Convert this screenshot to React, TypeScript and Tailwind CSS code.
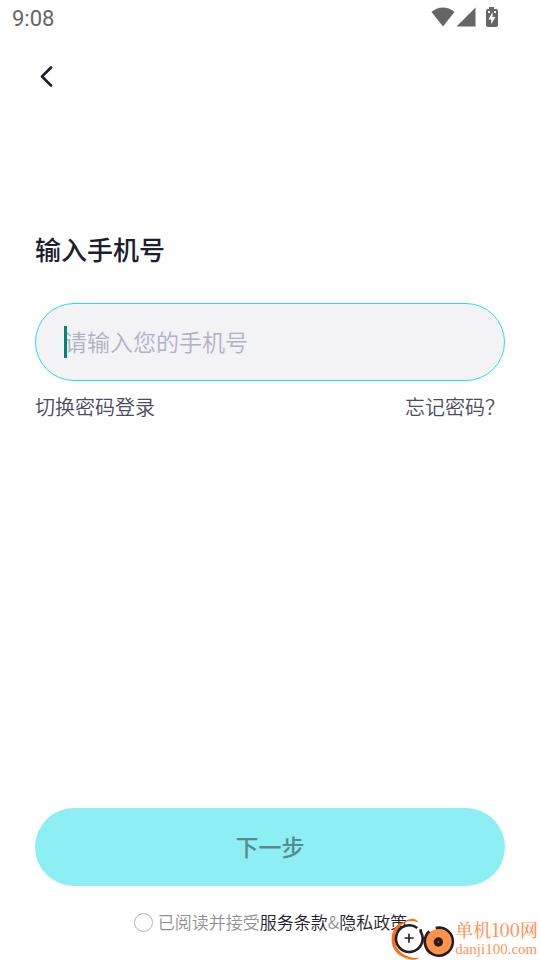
import { useState } from "react";

export default function App() {
  return (
    <div className="relative flex min-h-screen flex-col bg-white font-['Noto_Sans_CJK_SC','Noto_Sans',sans-serif] font-[350] text-[#1b202c]">
      <StatusBar />
      <LoginForm />
      <Watermark />
    </div>
  );
}

function StatusBar() {
  return (
    <header className="flex h-9 items-center justify-between pr-[41px] pl-3 text-[#666666]">
      <time className="pt-[2px] font-[Roboto,sans-serif] text-[22px] leading-9 font-normal">
        9:08
      </time>
      <div className="flex items-center pb-[2px]">
        <WifiIcon className="mr-px h-5 w-6" />
        <SignalIcon className="mr-[9px] h-5 w-5" />
        <BatteryIcon className="h-5 w-[14px]" />
      </div>
    </header>
  );
}

function LoginForm() {
  const [phone, setPhone] = useState("");
  const [accepted, setAccepted] = useState(false);

  return (
    <form
      className="flex flex-1 flex-col px-[35px] pb-[26px]"
      onSubmit={(event) => event.preventDefault()}
    >
      <button type="button" aria-label="返回" className="mt-6 h-8 w-6">
        <BackIcon className="h-8 w-6" />
      </button>

      <h1 className="mt-[137px] text-[26px] leading-10 font-medium">
        <label htmlFor="phone">输入手机号</label>
      </h1>

      {/* Phone field */}
      <div className="relative mt-[34px]">
        <input
          id="phone"
          type="tel"
          value={phone}
          onChange={(event) => setPhone(event.target.value)}
          placeholder="请输入您的手机号"
          className="h-[78px] w-full rounded-full border border-[#27dfe6] bg-[#f3f3f6] px-7 pb-[2px] text-[23px] caret-[#008577] outline-none placeholder:text-[#afb1c5]"
        />
        {!phone && (
          <span className="pointer-events-none absolute top-[23px] left-[29px] h-8 w-[3px] bg-[#008577]" />
        )}
      </div>

      <div className="mt-[10px] flex justify-between text-xl leading-8 text-[#4a4b5e]">
        <a href="#password">切换密码登录</a>
        <a href="#forgot">忘记密码？</a>
      </div>

      <button
        type="submit"
        className="mt-auto h-[78px] w-full rounded-full bg-[#8deff4] pb-[2px] text-[23px] font-medium text-[#548b90]"
      >
        下一步
      </button>

      {/* Agreement */}
      <div className="mt-6 flex items-center justify-center pl-px text-[17px] leading-6 text-[#8f9193]">
        <input
          id="agreement"
          type="checkbox"
          checked={accepted}
          onChange={(event) => setAccepted(event.target.checked)}
          className="mr-[5px] size-[19px] appearance-none rounded-full border border-[#aeb0c4] checked:bg-[#27dfe6]"
        />
        <label htmlFor="agreement">已阅读并接受</label>
        <a href="#terms" className="text-[#1b202c]">
          服务条款
        </a>
        <span>&amp;</span>
        <a href="#privacy" className="text-[#1b202c]">
          隐私政策
        </a>
      </div>
    </form>
  );
}

function Watermark() {
  return (
    <div className="pointer-events-none absolute right-[2px] bottom-0 flex items-end text-[#ff9559]">
      <WatermarkLogo className="h-12 w-[70px]" />
      <div className="pb-px whitespace-nowrap">
        <div className="font-['Noto_Serif_CJK_SC','Noto_Sans_CJK_SC',serif] text-[18px] leading-5 font-medium">
          单机100网
        </div>
        <div className="font-['Liberation_Serif',serif] text-[15px] leading-5 font-normal">
          danji100.com
        </div>
      </div>
    </div>
  );
}

interface IconProps {
  className?: string;
}

function BackIcon({ className }: IconProps) {
  return (
    <svg
      className={className}
      viewBox="0 0 24 32"
      fill="none"
      stroke="currentColor"
      strokeWidth="2.6"
      strokeLinecap="round"
      strokeLinejoin="round"
    >
      <path d="M16 7.5 7 16.5l9 9" />
    </svg>
  );
}

function WifiIcon({ className }: IconProps) {
  return (
    <svg className={className} viewBox="0 0 24 20" fill="currentColor">
      <path d="M12 19.500.5 5C3.500 2.300 7.500.5 12 .5S20.500 2.300 23.500 5L12 19.500Z" />
    </svg>
  );
}

function SignalIcon({ className }: IconProps) {
  return (
    <svg className={className} viewBox="0 0 20 20" fill="currentColor">
      <path d="M.5 19.500 19.500 .5V19.500Z" />
    </svg>
  );
}

function BatteryIcon({ className }: IconProps) {
  return (
    <svg className={className} viewBox="0 0 14 20" fill="currentColor">
      <path d="M4 0h5v2h2q2 0 2 2v14q0 2-2 2H3q-2 0-2-2V4q0-2 2-2h1Z" />
      <path
        d="M3 4h2v2H3zM9 4h2v2H9zM7.500 5 3.500 12.500h2.700V17L10.500 10H7.500Z"
        fill="#fff"
      />
    </svg>
  );
}

function WatermarkLogo({ className }: IconProps) {
  return (
    <svg className={className} viewBox="0 0 210 144" fill="none">
      <path
        d="M82 20Q94 20 100 31Q68 20 48 40Q26 61 30 88Q34 123 76 136Q90 140 104 136Q92 147 74 142Q25 131 20 88Q17 54 42 35L60 28Q70 20 82 20Z"
        fill="#ff6f0f"
      />
      <circle cx="72" cy="79" r="39" fill="#fff" />
      <path d="M97 48A40 40 0 1 0 107 59L107 52" stroke="#281c20" strokeWidth="8" />
      <path d="M72 65v27M59 78h27" stroke="#281c20" strokeWidth="5" />
      <circle cx="160" cy="90" r="39" fill="#ff9149" />
      <path
        d="M152 48A42 42 0 1 1 133 58"
        stroke="#281c20"
        strokeWidth="8"
      />
      <circle cx="160" cy="90" r="14" fill="#281c20" />
      <circle cx="160" cy="90" r="2" fill="#ff9149" />
    </svg>
  );
}
